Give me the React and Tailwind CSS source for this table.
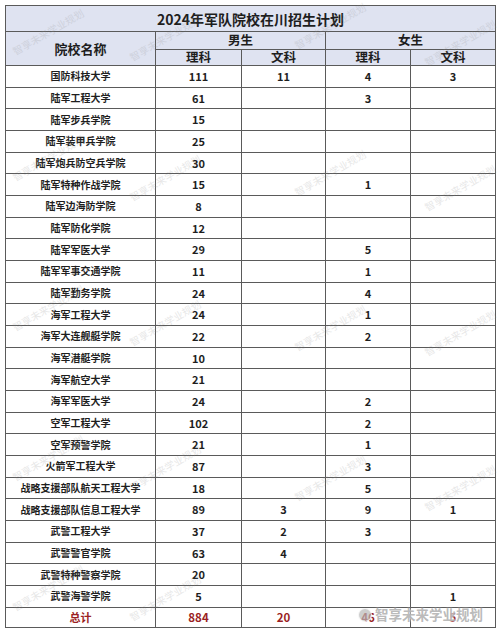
import React from "react";

// 2024 military academy enrollment plan (Sichuan)
const rows = [
  ["国防科技大学", "111", "11", "4", "3"],
  ["陆军工程大学", "61", "", "3", ""],
  ["陆军步兵学院", "15", "", "", ""],
  ["陆军装甲兵学院", "25", "", "", ""],
  ["陆军炮兵防空兵学院", "30", "", "", ""],
  ["陆军特种作战学院", "15", "", "1", ""],
  ["陆军边海防学院", "8", "", "", ""],
  ["陆军防化学院", "12", "", "", ""],
  ["陆军军医大学", "29", "", "5", ""],
  ["陆军军事交通学院", "11", "", "1", ""],
  ["陆军勤务学院", "24", "", "4", ""],
  ["海军工程大学", "24", "", "1", ""],
  ["海军大连舰艇学院", "22", "", "2", ""],
  ["海军潜艇学院", "10", "", "", ""],
  ["海军航空大学", "21", "", "", ""],
  ["海军军医大学", "24", "", "2", ""],
  ["空军工程大学", "102", "", "2", ""],
  ["空军预警学院", "21", "", "1", ""],
  ["火箭军工程大学", "87", "", "3", ""],
  ["战略支援部队航天工程大学", "18", "", "5", ""],
  ["战略支援部队信息工程大学", "89", "3", "9", "1"],
  ["武警工程大学", "37", "2", "3", ""],
  ["武警警官学院", "63", "4", "", ""],
  ["武警特种警察学院", "20", "", "", ""],
  ["武警海警学院", "5", "", "", "1"],
];

const marks = [
  [8, 24], [125, 30], [290, 18], [420, 35],
  [8, 150], [125, 170], [290, 165], [420, 180],
  [8, 300], [125, 315], [290, 320], [420, 325],
  [8, 450], [125, 460], [290, 470], [420, 480],
  [8, 580], [125, 590],
];

const cell = "border border-[#5a5a5a] text-center p-0";

export default function App() {
  return (
    <div
      className="relative w-[500px] h-[634px] bg-white overflow-hidden pt-[5px] px-[5px]"
      style={{ fontFamily: '"Noto Sans CJK SC", "Noto Sans", sans-serif' }}
    >
      <table className="w-[490px] table-fixed border-collapse text-[#1e1e1e] font-bold">
        <colgroup>
          <col className="w-[150px]" />
          <col className="w-[86px]" />
          <col className="w-[84px]" />
          <col className="w-[85px]" />
          <col className="w-[85px]" />
        </colgroup>
        <thead className="bg-[#dfe3f1]">
          <tr className="h-[26px]">
            <th colSpan={5} className={`${cell} text-[14px] leading-none`}>
              2024年军队院校在川招生计划
            </th>
          </tr>
          <tr className="h-[18px]">
            <th rowSpan={2} className={`${cell} text-[13px] leading-none`}>
              院校名称
            </th>
            <th colSpan={2} className={`${cell} text-[12.5px] leading-none`}>
              男生
            </th>
            <th colSpan={2} className={`${cell} text-[12.5px] leading-none`}>
              女生
            </th>
          </tr>
          <tr className="h-[16px]">
            <th className={`${cell} text-[12.5px] leading-none`}>理科</th>
            <th className={`${cell} text-[12.5px] leading-none`}>文科</th>
            <th className={`${cell} text-[12.5px] leading-none`}>理科</th>
            <th className={`${cell} text-[12.5px] leading-none`}>文科</th>
          </tr>
        </thead>
        <tbody>
          {rows.map((r) => (
            <tr key={r[0]} className="h-[21.68px]">
              <td className={`${cell} text-[10px] leading-none`}>{r[0]}</td>
              {r.slice(1).map((v, i) => (
                <td key={i} className={`${cell} text-[11px] leading-none`}>
                  {v}
                </td>
              ))}
            </tr>
          ))}
          <tr className="h-[20px] text-[#9b1f24]">
            <td className={`${cell} text-[11px] leading-none`}>总计</td>
            <td className={`${cell} text-[11.5px] leading-none`}>884</td>
            <td className={`${cell} text-[11.5px] leading-none`}>20</td>
            <td className={`${cell} text-[11.5px] leading-none`}>46</td>
            <td className={`${cell} text-[11.5px] leading-none`}>5</td>
          </tr>
        </tbody>
      </table>

      {/* faint diagonal watermarks */}
      {marks.map(([x, y], i) => (
        <div
          key={i}
          className="absolute text-[10px] text-[#8a8a8a] opacity-20 -rotate-[30deg] whitespace-nowrap pointer-events-none"
          style={{ left: x, top: y }}
        >
          智享未来学业规划
        </div>
      ))}

      {/* platform watermark over the total row */}
      <div className="absolute left-[358px] top-[608px] flex items-center gap-[3px] pointer-events-none">
        <div className="w-[14px] h-[14px] rounded-full bg-[#b9b9b9]/70 border border-white/80" />
        <span className="text-[13.5px] leading-none font-bold text-[#a8a8a8]/80 [text-shadow:0_0_2px_#fff]">
          智享未来学业规划
        </span>
      </div>
    </div>
  );
}
